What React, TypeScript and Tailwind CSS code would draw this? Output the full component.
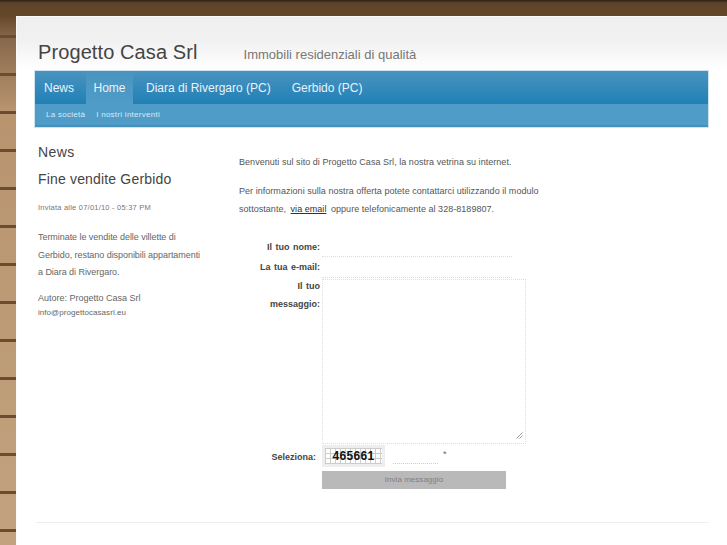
export default function App() {
  const label = "pr-[1px] text-right font-bold text-[#444] text-[9px] [word-spacing:1px]";
  return (
    <div className="h-[545px] w-[727px] overflow-hidden pl-[16px] pt-[16px] font-['Liberation_Sans',Arial,sans-serif] bg-[repeating-linear-gradient(to_bottom,transparent_0px,transparent_35px,#6b4c2f_35px,#6b4c2f_38px,transparent_38px,transparent_36px),linear-gradient(to_bottom,#2e2118_0px,#5f4328_3px,#654829_16px,#86664a_36px,#b8946f_110px,#c2a27f_545px)]">
      <div className="h-[529px] border-l border-t border-[#fbfbfb] bg-white">
        <div className="h-[53px] bg-[linear-gradient(to_bottom,#efefef_0px,#f1f1f1_25px,#ffffff_53px)] pl-[21px] pt-[22px]">
          <div className="flex items-baseline">
            <span className="text-[20px] leading-[26px] text-[#444] tracking-[0.1px]">Progetto Casa Srl</span>
            <span className="ml-[46px] text-[13px] text-[#777]">Immobili residenziali di qualità</span>
          </div>
        </div>
        <div className="ml-[17px] w-[675px] border border-[#cfe3ef] bg-[#4f9cc8]">
          <div className="flex h-[33px] bg-[linear-gradient(to_bottom,#4a93bf,#2180b6)] text-[12px] text-[#e9f3f9]">
            <div className="flex w-[51px] items-center pl-[9px]">News</div>
            <div className="flex w-[47px] items-center justify-center bg-[linear-gradient(to_bottom,#4a93bf,#4f9cc8)]">Home</div>
            <div className="ml-[13px] flex items-center">Diara di Rivergaro (PC)</div>
            <div className="ml-[21px] flex items-center">Gerbido (PC)</div>
          </div>
          <div className="flex h-[23px] items-center border-b-2 border-[#4590bd] pl-[11px] text-[8px] tracking-[0.27px] text-[#d8eaf4]">
            <span>La società</span>
            <span className="ml-[11px]">I nostri interventi</span>
          </div>
        </div>
        <div className="flex pt-[15px]">
          <div className="ml-[21px] w-[200px] text-[#666]">
            <h2 className="text-[14px] leading-[18px] tracking-[0.4px] text-[#444]">News</h2>
            <h3 className="mt-[9px] text-[14px] leading-[18px] tracking-[0.17px] text-[#444]">Fine vendite Gerbido</h3>
            <p className="mt-[15px] text-[7.5px] leading-[10px] tracking-[0.22px] text-[#777]">Inviata alle 07/01/10 - 05:37 PM</p>
            <p className="mt-[16px] w-[166px] text-[9px] leading-[17.5px] tracking-[-0.05px]">Terminate le vendite delle villette di Gerbido, restano disponibili appartamenti a Diara di Rivergaro.</p>
            <p className="mt-[8px] text-[9px] leading-[17px]">Autore: Progetto Casa Srl</p>
            <p className="mt-[1px] text-[8px] leading-[10px] tracking-[0.05px]">info@progettocasasrl.eu</p>
          </div>
          <div className="ml-[1px] flex-1 text-[#555]">
            <p className="pt-[10px] text-[9px] leading-[18px] tracking-[0.04px]">Benvenuti sul sito di Progetto Casa Srl, la nostra vetrina su internet.</p>
            <p className="mt-[11px] text-[9px] leading-[18px] tracking-[0.04px]">
              Per informazioni sulla nostra offerta potete contattarci utilizzando il modulo<br />
              sottostante, <span className="mx-[2px] text-[#333] underline">via email</span> oppure telefonicamente al 328-8189807.
            </p>
            <div className="mt-[16px] grid grid-cols-[82px_1fr] gap-x-[1px]">
              <div className={`${label} pt-[5px] leading-[16px]`}>Il tuo nome:</div>
              <div className="h-[23px] w-[190px] border-b border-dotted border-[#ddd]" />
              <div className={`${label} pt-[2px] leading-[16px]`}>La tua e-mail:</div>
              <div className="h-[21px] w-[190px] border-b border-dotted border-[#ddd]" />
              <div className={`${label} -mt-[1px] leading-[18px]`}>Il tuo<br />messaggio:</div>
              <div className="relative mt-[1px] h-[165px] w-[204px]">
                <textarea className="block h-full w-full resize-none border border-dotted border-[#ddd] bg-white outline-none" />
                <svg className="absolute bottom-[5px] right-[3px]" width="7" height="7" viewBox="0 0 7 7" fill="none" stroke="#999" strokeWidth="1">
                  <path d="M0.5 6.5 L6.5 0.5 M3.5 6.5 L6.5 3.5" />
                </svg>
              </div>
              <div className={`${label} pr-[5px] pt-[7px] leading-[12px]`}>Seleziona:</div>
              <div className="mt-[1px] flex items-start">
                <div className="h-[22px] w-[63px] border-[3px] border-[#eeeeee] bg-white">
                  <div className="flex h-full w-full items-center justify-center bg-white bg-[repeating-linear-gradient(to_right,#ccc_0px,#ccc_1px,transparent_1px,transparent_5px),repeating-linear-gradient(to_bottom,#ccc_0px,#ccc_1px,transparent_1px,transparent_5px)] text-[12px] font-bold leading-none tracking-[0.3px] text-[#111]">465661</div>
                </div>
                <div className="ml-[8px] h-[19px] w-[45px] border-b border-dotted border-[#ccc]" />
                <span className="ml-[5px] mt-[4px] text-[9px] leading-[10px] text-[#666]">*</span>
              </div>
              <div />
              <div className="mt-[4px] flex h-[18px] w-[184px] items-center justify-center bg-[#b9b9b9] text-[8px] tracking-[0.03px] text-[#808080]">Invia messaggio</div>
            </div>
          </div>
        </div>
        <div className="ml-[19px] mt-[33px] w-[673px] border-t border-[#eeeeee]" />
      </div>
    </div>
  );
}
